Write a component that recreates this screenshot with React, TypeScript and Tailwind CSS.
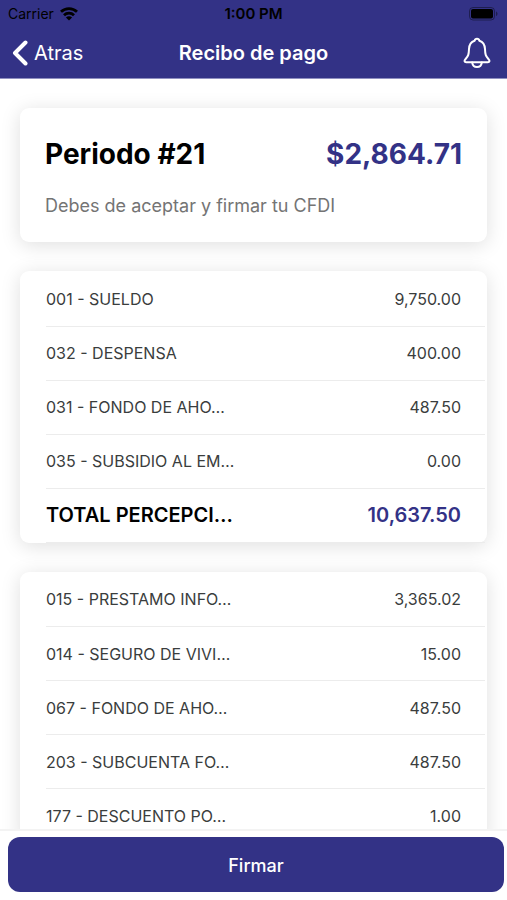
type Row = { concept: string; amount: string; total?: boolean };

const perceptions: Row[] = [
  { concept: "001 - SUELDO", amount: "9,750.00" },
  { concept: "032 - DESPENSA", amount: "400.00" },
  { concept: "031 - FONDO DE AHO…", amount: "487.50" },
  { concept: "035 - SUBSIDIO AL EM…", amount: "0.00" },
  { concept: "TOTAL PERCEPCI…", amount: "10,637.50", total: true },
];

const deductions: Row[] = [
  { concept: "015 - PRESTAMO INFO…", amount: "3,365.02" },
  { concept: "014 - SEGURO DE VIVI…", amount: "15.00" },
  { concept: "067 - FONDO DE AHO…", amount: "487.50" },
  { concept: "203 - SUBCUENTA FO…", amount: "487.50" },
  { concept: "177 - DESCUENTO PO…", amount: "1.00" },
];

const cardStyle = "rounded-[9px] bg-white shadow-[0_3px_20px_rgba(0,0,0,0.13)]";

function WifiIcon() {
  return (
    <svg viewBox="0 0 18 14" className="h-[14px] w-[18px]" fill="none" stroke="black" strokeWidth="2.8" aria-hidden="true">
      <path d="M1 4.8C5.5 0.5 12.5 0.5 17 4.8" />
      <path d="M4 8.2C6.8 5.5 11.2 5.5 14 8.2" />
      <path d="M9 13.4L5.9 10.5C7.6 8.9 10.4 8.9 12.1 10.5Z" fill="black" stroke="none" />
    </svg>
  );
}

function BatteryIcon() {
  return (
    <svg viewBox="0 0 30 14" className="h-[14px] w-[30px]" aria-hidden="true">
      <rect x="0.5" y="0.5" width="25" height="12.5" rx="3.5" fill="none" stroke="black" strokeOpacity="0.4" />
      <rect x="2" y="2" width="22" height="9.5" rx="2" fill="black" />
      <path d="M27 4.5C29 5.2 29 8.3 27 9Z" fill="black" fillOpacity="0.4" />
    </svg>
  );
}

function BellIcon() {
  return (
    <svg viewBox="0 0 28 32" className="h-8 w-7" fill="none" stroke="white" strokeWidth="2" strokeLinejoin="round" strokeLinecap="round" aria-hidden="true">
      <path d="M11.6 3.8C12.2 1.2 15.8 1.2 16.4 3.8C20 5 21.8 7.8 22 12C22.2 17.4 22.6 19 25.4 22C27.2 24 26.6 25.2 24.8 25.2H3.2C1.4 25.2 0.8 24 2.6 22C5.4 19 5.8 17.4 6 12C6.2 7.8 8 5 11.6 3.8Z" />
      <path d="M9.2 25.6C9.6 28.6 11.6 30 14 30C16.4 30 18.4 28.6 18.8 25.6" />
    </svg>
  );
}

function ConceptTable({ label, rows }: { label: string; rows: Row[] }) {
  return (
    <section className={`${cardStyle} pt-px pr-0.5 pl-[26px]`}>
      <table aria-label={label} className="w-full border-collapse text-[16px] leading-6 text-[#3a3d3d]">
        <tbody>
          {rows.map((row) => (
            <tr key={row.concept} className="h-[54px] border-b border-[#ececec]">
              <th scope="row" className={row.total ? "text-left text-[20px] font-semibold text-black" : "text-left font-normal"}>
                {row.concept}
              </th>
              <td className={row.total ? "pr-6 text-right text-[20px] font-semibold text-[#333286]" : "pr-6 text-right"}>
                {row.amount}
              </td>
            </tr>
          ))}
        </tbody>
      </table>
    </section>
  );
}

export default function App() {
  return (
    <div className="flex h-dvh flex-col bg-white font-['Inter','Liberation_Sans',sans-serif]">
      <header className="bg-[#333286]">
        <div className="grid h-7 grid-cols-[1fr_auto_1fr] items-center px-2 text-[14px] leading-5 text-black">
          <span className="flex items-center gap-1.5">
            Carrier
            <WifiIcon />
          </span>
          <span className="text-center text-[15px] font-semibold">1:00 PM</span>
          <span className="flex justify-end">
            <BatteryIcon />
          </span>
        </div>
        <div className="grid h-[51px] grid-cols-[1fr_auto_1fr] items-center border-b border-[#8f8fc0] px-3 text-[20px] leading-7 text-white">
          <button type="button" className="flex items-center gap-1.5">
            <svg viewBox="0 0 16 26" className="h-[26px] w-4" fill="none" stroke="white" strokeWidth="4" strokeLinecap="round" strokeLinejoin="round" aria-hidden="true">
              <path d="M13.5 2.5L3 13L13.5 23.5" />
            </svg>
            Atras
          </button>
          <h1 className="font-semibold">Recibo de pago</h1>
          <button type="button" aria-label="Notificaciones" className="justify-self-end pr-1">
            <BellIcon />
          </button>
        </div>
      </header>

      <main className="flex min-h-0 flex-1 flex-col gap-[29px] overflow-y-auto px-5 pt-[29px] pb-7 [scrollbar-width:none]">
        <section className={`${cardStyle} shrink-0 px-[25px] pt-7 pb-[22px]`}>
          <div className="flex items-center justify-between text-[28px] leading-9 font-bold">
            <h2 className="text-black">Periodo #21</h2>
            <p className="text-[#333286]">$2,864.71</p>
          </div>
          <p className="mt-5 text-[18px] leading-7 text-[#747474]">Debes de aceptar y firmar tu CFDI</p>
        </section>
        <ConceptTable label="Percepciones" rows={perceptions} />
        <ConceptTable label="Deducciones" rows={deductions} />
      </main>

      <footer className="border-t-2 border-[#f3f3f3] bg-white pt-1.5 pr-[3px] pb-2 pl-2">
        <button type="button" className="h-[55px] w-full rounded-xl bg-[#333286] pt-0.5 text-[18px] leading-7 font-medium text-white">
          Firmar
        </button>
      </footer>
    </div>
  );
}
